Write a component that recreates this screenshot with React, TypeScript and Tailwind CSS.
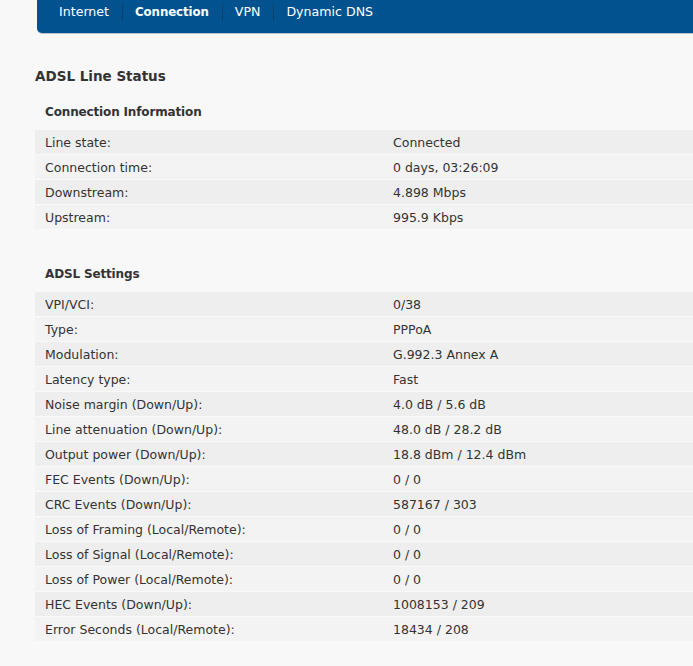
const connectionInfo: [string, string][] = [
  ['Line state:', 'Connected'],
  ['Connection time:', '0 days, 03:26:09'],
  ['Downstream:', '4.898 Mbps'],
  ['Upstream:', '995.9 Kbps'],
];

const adslSettings: [string, string][] = [
  ['VPI/VCI:', '0/38'],
  ['Type:', 'PPPoA'],
  ['Modulation:', 'G.992.3 Annex A'],
  ['Latency type:', 'Fast'],
  ['Noise margin (Down/Up):', '4.0 dB / 5.6 dB'],
  ['Line attenuation (Down/Up):', '48.0 dB / 28.2 dB'],
  ['Output power (Down/Up):', '18.8 dBm / 12.4 dBm'],
  ['FEC Events (Down/Up):', '0 / 0'],
  ['CRC Events (Down/Up):', '587167 / 303'],
  ['Loss of Framing (Local/Remote):', '0 / 0'],
  ['Loss of Signal (Local/Remote):', '0 / 0'],
  ['Loss of Power (Local/Remote):', '0 / 0'],
  ['HEC Events (Down/Up):', '1008153 / 209'],
  ['Error Seconds (Local/Remote):', '18434 / 208'],
];

const tabs = ['Internet', 'Connection', 'VPN', 'Dynamic DNS'];

function StatusTable({ title, rows }: { title: string; rows: [string, string][] }) {
  return (
    <section>
      <h3 className="pl-[10px] h-[19px] pt-[2px] leading-[19px] font-bold text-[12px] tracking-[-0.15px] text-[#333]">
        {title}
      </h3>
      <div className="mt-[10px] flex flex-col">
        {rows.map(([label, value], i) => (
          <div
            key={label}
            className={`flex h-[25px] pt-[2px] items-center border-b border-[#f9f9f9] ${
              i % 2 === 0 ? 'bg-[#eeeeee]' : 'bg-[#f3f3f3]'
            }`}
          >
            <span className="w-[358px] pl-[10px]">{label}</span>
            <span>{value}</span>
          </div>
        ))}
      </div>
    </section>
  );
}

export default function App() {
  return (
    <main
      className="min-h-[666px] bg-[#f8f8f8] text-[12.5px] text-[#333] overflow-hidden"
      style={{ fontFamily: '"DejaVu Sans", Verdana, sans-serif' }}
    >
      <nav className="ml-[37px] h-[33px] bg-[#01528f] rounded-bl-[5px] shadow-[0_1px_0_#b9c2cc] flex items-start pt-[3px] pl-[10px] text-white text-[12.6px]">
        {tabs.map((tab, i) => (
          <div key={tab} className="flex items-center">
            {i > 0 && <span className="w-px h-[17px] bg-[#0f3f6c]" />}
            <span
              className={`pl-[12px] pr-[13px] leading-[18px] ${
                tab === 'Connection' ? 'font-bold text-[11.8px] tracking-[-0.1px]' : ''
              }`}
            >
              {tab}
            </span>
          </div>
        ))}
      </nav>

      <div className="pl-[35px] pt-[33px]">
        <h2 className="font-bold text-[13.5px] leading-[20px] text-[#333]">ADSL Line Status</h2>
        <div className="mt-[15px]">
          <StatusTable title="Connection Information" rows={connectionInfo} />
        </div>
        <div className="mt-[33px]">
          <StatusTable title="ADSL Settings" rows={adslSettings} />
        </div>
      </div>
    </main>
  );
}
